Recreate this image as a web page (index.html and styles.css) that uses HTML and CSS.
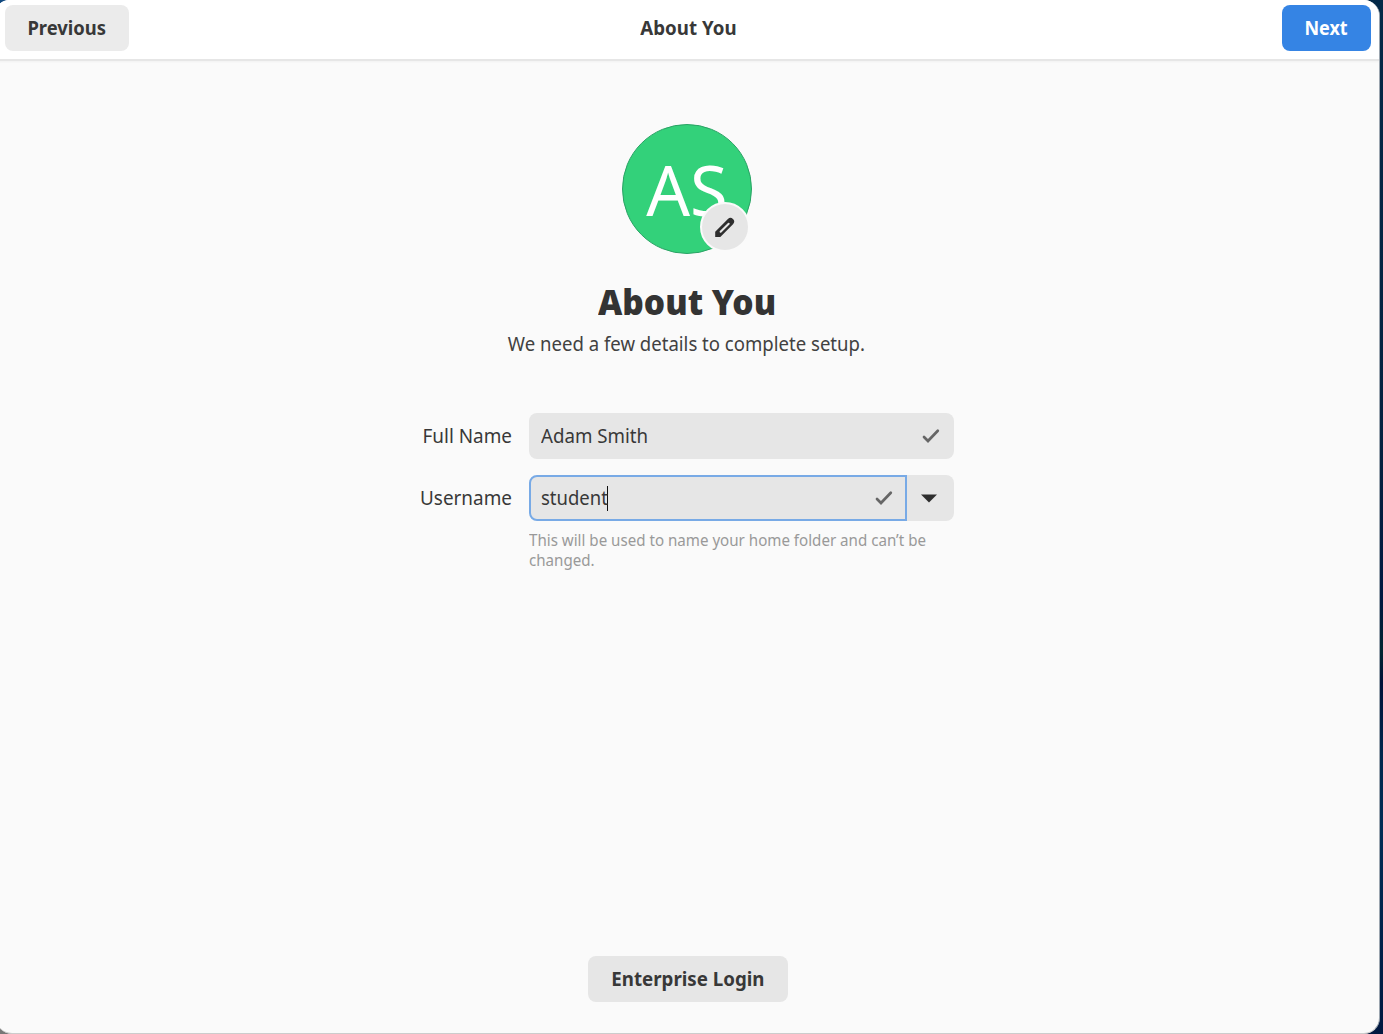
FILE: index.html
```html
<!DOCTYPE html>
<html lang="en">
<head>
<meta charset="utf-8">
<title>About You</title>
<link rel="stylesheet" href="styles.css">
</head>
<body>
<div class="window">
  <header class="headerbar">
    <button class="button previous"><span class="narrow">Previous</span></button>
    <h2 class="title narrow">About You</h2>
    <button class="button suggested"><span class="narrow">Next</span></button>
  </header>
  <main class="page">
    <div class="avatar"><span class="initials">AS</span>
      <button class="edit" aria-label="Edit"><svg width="24" height="24" viewBox="0 0 24 24"><path d="M2.2 22v-5.2L14.9 4.1a3.6 3.6 0 0 1 5.1 5.1L7.3 22Z" fill="#2e2e2e"/><path d="M7.6 16.8 15.7 8.7" stroke="#e6e6e6" stroke-width="2" stroke-linecap="round"/></svg></button>
    </div>
    <h1 class="heading">About You</h1>
    <p class="subtitle narrow">We need a few details to complete setup.</p>
    <div class="form">
      <label class="label narrow">Full Name</label>
      <div class="entry"><span class="value narrow">Adam Smith</span><svg class="check" width="20" height="18" viewBox="0 0 20 18"><path d="m3 10 4 4L16.8 3.8" fill="none" stroke="#666" stroke-width="2.7" stroke-linecap="round"/></svg></div>
      <label class="label narrow">Username</label>
      <div class="combo">
        <div class="entry focused"><span class="value username narrow">student</span><i class="caret"></i><svg class="check" width="20" height="18" viewBox="0 0 20 18"><path d="m3 10 4 4L16.8 3.8" fill="none" stroke="#666" stroke-width="2.7" stroke-linecap="round"/></svg></div>
        <button class="drop" aria-label="Suggestions"><svg width="16" height="9" viewBox="0 0 16 9"><path d="M0 .5h16L8 8.5Z" fill="#2e2e2e"/></svg></button>
      </div>
      <p class="hint narrow">This will be used to name your home folder and can’t be<br>changed.</p>
    </div>
    <button class="button enterprise"><span class="narrow">Enterprise Login</span></button>
  </main>
</div>
</body>
</html>
```
FILE: styles.css
```css
* { box-sizing: border-box; }
body {
  margin: 0;
  height: 1034px;
  overflow: hidden;
  background: linear-gradient(#777, #777) 0 100% / 30px 16px no-repeat,
    linear-gradient(#124a80, #124a80) 0 0 / 30px 16px no-repeat,
    linear-gradient(#032947, #04213f 45%, #001840 58%, #012530 63%, #001138 66%, #00274d 73%, #002d55 80%, #001840 100%);
  font: 20px/28px "Noto Sans", sans-serif;
  color: #383838;
}
.window {
  width: 1384px;
  height: 1034px;
  margin-left: -4px;
  display: flex;
  flex-direction: column;
  background: #fafafa;
  border-right: 1px solid #9ba5af;
  border-bottom: 1px solid #ccc;
  border-radius: 13px 16px 16px 16px;
  overflow: hidden;
}
button { font: inherit; color: inherit; border: 0; padding: 0; }

/* Condensed text */
.narrow { display: block; transform: scaleX(.935); }

.headerbar {
  display: grid;
  grid-template-columns: 1fr auto 1fr;
  align-items: center;
  flex: none;
  height: 61px;
  padding: 0 8px 3px 9px;
  background: #fff;
  border-bottom: 2px solid #e6e6e6;
  box-shadow: 0 1px 2px #0000000a;
}
.title { margin: 0; font-size: 20px; font-weight: 700; }
.button {
  display: flex;
  align-items: center;
  justify-content: center;
  height: 46px;
  border-radius: 8px;
  background: #e6e6e6;
  font-weight: 700;
}
.previous { width: 124px; background: #ebebeb; }
.previous .narrow { transform: scaleX(.92); }
.suggested { width: 89px; background: #3584e4; color: #fff; justify-self: end; }
.suggested .narrow { transform: scaleX(.9); }
.page {
  flex: 1;
  display: flex;
  flex-direction: column;
  align-items: center;
  padding: 63px 0 31px 5px;
}
.avatar {
  position: relative;
  width: 130px;
  height: 130px;
  margin-right: 7px;
  border: 1.5px solid #2aa365;
  border-radius: 50%;
  background: #33d17a;
  color: #fff;
  text-align: center;
}
.initials { display: block; font-size: 70px; line-height: 128px; transform: scaleX(.98); }
.edit {
  position: absolute;
  left: 77px;
  top: 77px;
  width: 50px;
  height: 50px;
  display: grid;
  place-items: center;
  border: 2px solid #fafafa;
  border-radius: 50%;
  background: #e6e6e6;
}
.heading { margin: 26px 6px 0 0; font-size: 35px; line-height: 44px; font-weight: 900; color: #333; transform: scaleX(.957); }
.subtitle { margin: 6px 7px 0 0; color: #414141; transform: scaleX(.928); }
.form {
  display: grid;
  grid-template-columns: 112px 425px;
  column-gap: 17px;
  row-gap: 16px;
  margin: 55px 0 0 399px;
  align-self: flex-start;
}
.label { text-align: right; line-height: 46px; white-space: nowrap; transform: scaleX(.945); transform-origin: right; }
.entry {
  display: flex;
  align-items: center;
  height: 46px;
  padding: 0 13px 0 12px;
  border-radius: 8px;
  background: #e6e6e6;
}
.value { transform-origin: left; }
.username { transform: scaleX(.925); margin-right: -6px; }
.check { margin-left: auto; }
.combo { display: flex; }
.focused { width: 378px; padding: 0 11px 0 10px; border: 2px solid #78aae6; border-radius: 8px 0 0 8px; }
.caret { width: 1px; height: 25px; background: #111; }
.drop { width: 47px; padding-right: 3px; display: grid; place-items: center; background: #e6e6e6; border-radius: 0 8px 8px 0; }
.hint {
  grid-column: 2;
  margin: -7px 0 0;
  font-size: 16px;
  line-height: 20px;
  color: #999;
  white-space: nowrap;
  transform: scaleX(.945);
  transform-origin: left;
}
.enterprise { width: 200px; margin-top: auto; margin-right: 5px; }
```
